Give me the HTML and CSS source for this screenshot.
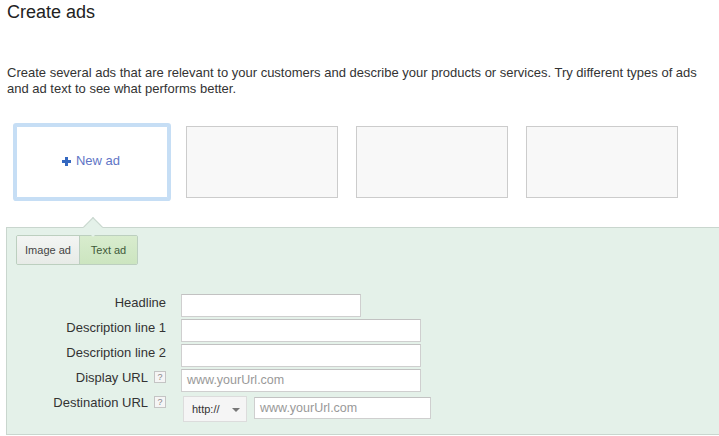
FILE: index.html
```html
<!DOCTYPE html>
<html>
<head>
<meta charset="utf-8">
<link rel="stylesheet" href="styles.css">
</head>
<body>
<h1 class="title">Create ads</h1>
<p class="intro">Create several ads that are relevant to your customers and describe your products or services. Try different types of ads and ad text to see what performs better.</p>
<div class="cards">
  <div class="card selected">
    <span class="plus"><svg width="9" height="9" viewBox="0 0 9 9"><path d="M3 0h3v3h3v3H6v3H3V6H0V3h3z" fill="#3568c0"/></svg></span>
    <span class="new-ad">New ad</span>
  </div>
  <div class="card"></div>
  <div class="card"></div>
  <div class="card"></div>
</div>
<div class="panel">
  <div class="tabs">
    <div class="tab">Image ad</div>
    <div class="tab active">Text ad</div>
  </div>
  <div class="form">
    <div class="label">Headline</div>
    <div class="field"><div class="input w180"></div></div>
    <div class="label">Description line 1</div>
    <div class="field"><div class="input w240"></div></div>
    <div class="label">Description line 2</div>
    <div class="field"><div class="input w240"></div></div>
    <div class="label">Display URL <span class="help">?</span></div>
    <div class="field"><div class="input w240 ph">www.yourUrl.com</div></div>
    <div class="label dest">Destination URL <span class="help">?</span></div>
    <div class="field dest-field">
      <div class="select">http://<span class="caret"></span></div>
      <div class="input w177 ph short">www.yourUrl.com</div>
    </div>
  </div>
</div>
</body>
</html>
```
FILE: styles.css
```css
body {
  margin: 0;
  font-family: "Liberation Sans", Arial, sans-serif;
  color: #333;
  background: #fff;
  overflow: hidden;
}
.title {
  margin: 0;
  padding: 1px 0 0 7px;
  font-size: 18px;
  line-height: 22px;
  font-weight: normal;
  color: #222;
}
.intro {
  margin: 42px 0 0 7px;
  font-size: 13px;
  line-height: 16px;
  width: 705px;
}
.cards {
  display: flex;
  gap: 18px;
  margin: 29px 0 0 16px;
}
.card {
  width: 152px;
  height: 72px;
  box-sizing: border-box;
  border: 1px solid #cccccc;
  background: #f8f8f8;
}
.card.selected {
  background: #fff;
  border-color: #c6def5;
  box-shadow: 0 0 0 3px #c6def5;
  border-radius: 1px;
  display: flex;
  align-items: center;
  justify-content: center;
  gap: 5px;
  padding: 0 2px 3px 0;
}
.plus { display: flex; margin-top: 1px; }
.new-ad {
  font-size: 13px;
  color: #5f76c6;
}
.panel {
  position: relative;
  margin: 29px 0 0 6px;
  width: 713px;
  height: 208px;
  background: #e4f1e9;
  border: 1px solid #c9d6ce;
  border-right: 0;
  padding: 7px 0 0 9px;
  box-sizing: border-box;
}
.panel::before {
  content: "";
  position: absolute;
  left: 79px;
  top: -8px;
  width: 13px;
  height: 13px;
  background: #e4f1e9;
  border-left: 1px solid #c9d6ce;
  border-top: 1px solid #c9d6ce;
  transform: rotate(45deg);
}
.tabs {
  display: flex;
  width: max-content;
  border: 1px solid #bccfbf;
  border-radius: 2px;
  overflow: hidden;
}
.tab {
  height: 28px;
  line-height: 28px;
  font-size: 11px;
  color: #444;
  white-space: nowrap;
  text-align: center;
  width: 62px;
  background: linear-gradient(#f3f5f3, #e7ebe7);
}
.tab.active {
  border-left: 1px solid #bccfbf;
  background: linear-gradient(#d8ecce, #cce5c0);
  color: #3f5a3a;
  width: 57px;
}
.form {
  display: grid;
  grid-template-columns: 150px auto;
  column-gap: 15px;
  row-gap: 2px;
  margin-top: 29px;
}
.label {
  font-size: 13px;
  line-height: 17px;
  color: #333;
  display: flex;
  justify-content: flex-end;
  align-items: flex-start;
  gap: 6px;
  white-space: nowrap;
}
.help {
  display: inline-block;
  width: 10px;
  height: 10px;
  border: 1px solid #c4c4c4;
  background: #f5f5f5;
  color: #888;
  font-size: 9px;
  line-height: 10px;
  text-align: center;
  margin-top: 2px;
}
.field { display: flex; align-items: flex-start; }
.input {
  height: 23px;
  box-sizing: border-box;
  border: 1px solid #cfcfcf;
  border-top-color: #c2c2c2;
  background: #fff;
  font-size: 12.5px;
  line-height: 21px;
  padding-left: 5px;
}
.w180 { width: 180px; }
.w240 { width: 240px; }
.w177 { width: 177px; }
.ph { color: #999; }
.dest-field { gap: 7px; padding-top: 2px; padding-left: 2px; }
.input.short { height: 22px; line-height: 20px; margin-top: 1px; }
.select {
  width: 64px;
  height: 26px;
  box-sizing: border-box;
  border: 1px solid #dcdcdc;
  background: #f5f5f5;
  font-size: 11px;
  line-height: 24px;
  color: #333;
  padding-left: 8px;
  position: relative;
}
.caret {
  position: absolute;
  right: 6px;
  top: 11px;
  width: 0;
  height: 0;
  border-left: 4px solid transparent;
  border-right: 4px solid transparent;
  border-top: 4px solid #777;
}
```
